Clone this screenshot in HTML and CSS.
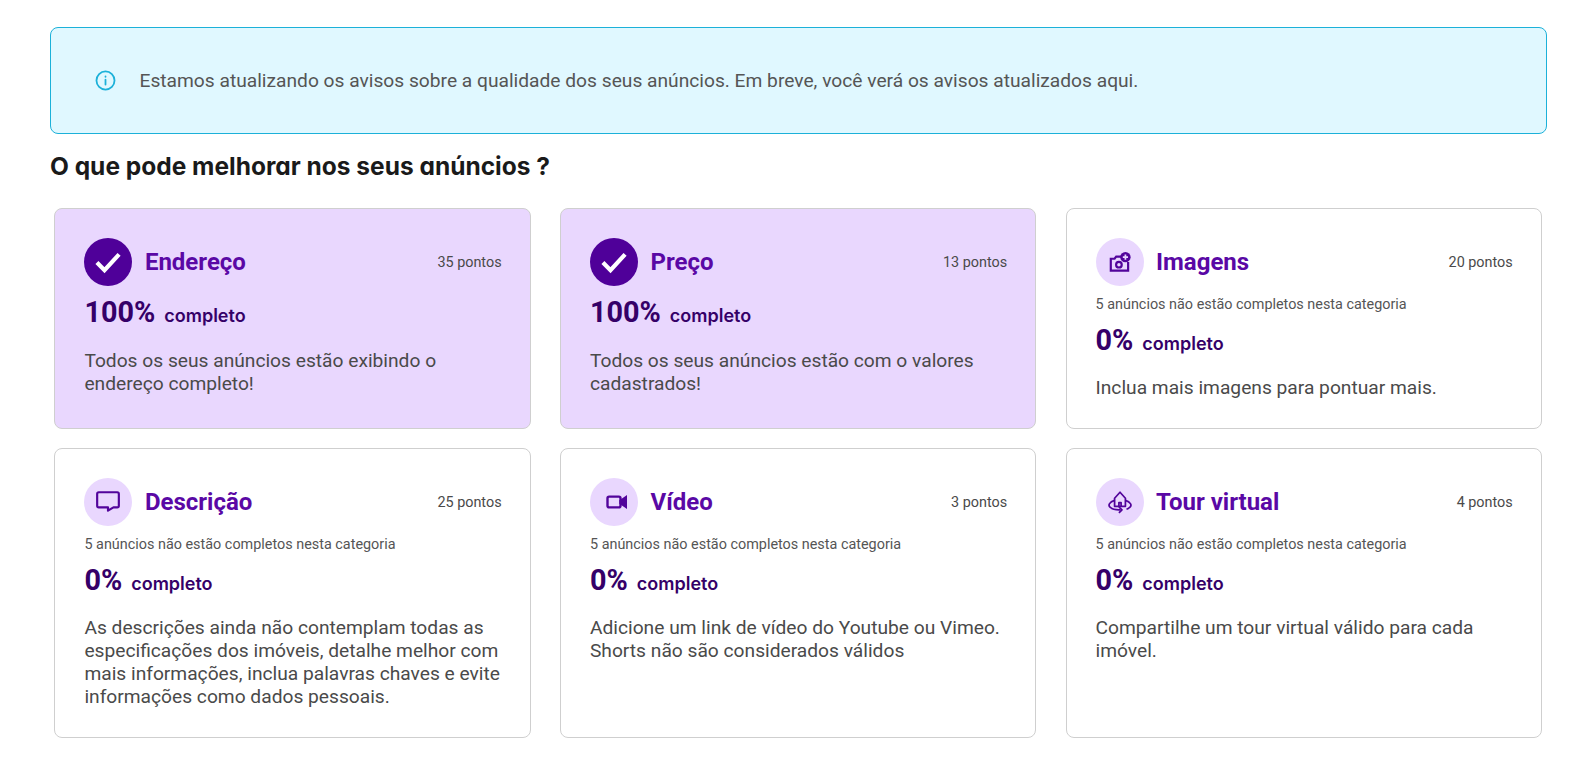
FILE: index.html
```html
<!DOCTYPE html>
<html lang="pt-BR">
<head>
  <meta charset="UTF-8">
  <meta name="viewport" content="width=device-width, initial-scale=1.0">
  <title>Qualidade dos anúncios</title>
  <link rel="stylesheet" href="styles.css">
</head>
<body>
  <div class="container">
    <div class="aviso">
      <svg class="aviso-icon" viewBox="0 0 20 20" fill="none" stroke="#1cb1d9" stroke-width="1.7" stroke-linecap="round">
        <circle cx="10" cy="10" r="8.6"/>
        <path d="M10 9.2v4.6"/>
        <path d="M10 6.2v.3"/>
      </svg>
      <p>Estamos atualizando os avisos sobre a qualidade dos seus anúncios. Em breve, você verá os avisos atualizados aqui.</p>
    </div>

    <h2>O que pode melhorar nos seus anúncios ?</h2>

    <div class="grid">
      <div class="card done">
        <div class="card-top">
          <span class="icon icon-done">
            <svg viewBox="0 0 24 24" fill="none" stroke="#fff" stroke-width="3.6"><path d="M2.500 12.500l6.500 6.500L21.500 5.500"/></svg>
          </span>
          <h3>Endereço</h3>
          <span class="pontos">35 pontos</span>
        </div>
        <div class="pct"><strong>100%</strong> <span>completo</span></div>
        <p class="desc">Todos os seus anúncios estão exibindo o endereço completo!</p>
      </div>

      <div class="card done">
        <div class="card-top">
          <span class="icon icon-done">
            <svg viewBox="0 0 24 24" fill="none" stroke="#fff" stroke-width="3.6"><path d="M2.500 12.500l6.500 6.500L21.500 5.500"/></svg>
          </span>
          <h3>Preço</h3>
          <span class="pontos">13 pontos</span>
        </div>
        <div class="pct"><strong>100%</strong> <span>completo</span></div>
        <p class="desc">Todos os seus anúncios estão com o valores cadastrados!</p>
      </div>

      <div class="card">
        <div class="card-top">
          <span class="icon">
            <svg viewBox="0 0 24 24" fill="none" stroke="#52049b" stroke-width="2">
              <path d="M13 7H8.500L7 9H3.500v11h16v-8"/>
              <circle cx="11" cy="14.500" r="2.600"/>
              <circle cx="17" cy="7.500" r="4.800" fill="#52049b" stroke="none"/>
              <path d="M17 5.100v4.800M14.600 7.500h4.800" stroke="#e9d7fe" stroke-width="1.600"/>
            </svg>
          </span>
          <h3>Imagens</h3>
          <span class="pontos">20 pontos</span>
        </div>
        <div class="aviso-card">5 anúncios não estão completos nesta categoria</div>
        <div class="pct"><strong>0%</strong> <span>completo</span></div>
        <p class="desc">Inclua mais imagens para pontuar mais.</p>
      </div>

      <div class="card">
        <div class="card-top">
          <span class="icon">
            <svg viewBox="0 0 24 24" fill="none" stroke="#52049b" stroke-width="2" stroke-linejoin="round">
              <path d="M2 4.500A1.500 1.500 0 0 1 3.500 3h17A1.500 1.500 0 0 1 22 4.500v11a1.500 1.500 0 0 1-1.500 1.500H17l-5 3v-3H3.500A1.500 1.500 0 0 1 2 15.500z"/>
            </svg>
          </span>
          <h3>Descrição</h3>
          <span class="pontos">25 pontos</span>
        </div>
        <div class="aviso-card">5 anúncios não estão completos nesta categoria</div>
        <div class="pct"><strong>0%</strong> <span>completo</span></div>
        <p class="desc">As descrições ainda não contemplam todas as especificações dos imóveis, detalhe melhor com mais informações, inclua palavras chaves e evite informações como dados pessoais.</p>
      </div>

      <div class="card">
        <div class="card-top">
          <span class="icon">
            <svg viewBox="0 0 24 24" fill="none" stroke="#52049b" stroke-width="2.200">
              <rect x="6" y="7" width="12" height="10" rx="1.500"/>
              <path d="M18 11l5-3.500v9L18 13z" fill="#52049b"/>
            </svg>
          </span>
          <h3>Vídeo</h3>
          <span class="pontos">3 pontos</span>
        </div>
        <div class="aviso-card">5 anúncios não estão completos nesta categoria</div>
        <div class="pct"><strong>0%</strong> <span>completo</span></div>
        <p class="desc">Adicione um link de vídeo do Youtube ou Vimeo. Shorts não são considerados válidos</p>
      </div>

      <div class="card">
        <div class="card-top">
          <span class="icon">
            <svg viewBox="0 0 24 24" fill="none" stroke="#52049b" stroke-width="1.600" stroke-linejoin="round">
              <path d="M7 16V8.500L12 3l5 5.500V16z"/>
              <path d="M11 16v-3.500h2V16"/>
              <path d="M7 10.500C2.500 12 .5 14.800 3 17c2 1.700 5.500 2.400 9.500 2.200M17 10.500c4.500 1.500 6.500 4.300 4 6.500-.8.700-1.800 1.300-3 1.700"/>
              <path d="M11 16.500l2.800 2.700L11 22"/>
            </svg>
          </span>
          <h3>Tour virtual</h3>
          <span class="pontos">4 pontos</span>
        </div>
        <div class="aviso-card">5 anúncios não estão completos nesta categoria</div>
        <div class="pct"><strong>0%</strong> <span>completo</span></div>
        <p class="desc">Compartilhe um tour virtual válido para cada imóvel.</p>
      </div>
    </div>
  </div>
</body>
</html>
```

FILE: styles.css
```css
body {
  font-family: Roboto, Arial, sans-serif;
  margin: 0;
  padding: 0;
  background: white;
  color: #4a4a4a;
}
.container {
  padding: 27px 37px 0 50px;
}
.aviso {
  display: flex;
  align-items: center;
  gap: 23.5px;
  height: 107px;
  box-sizing: border-box;
  padding: 0 44px 0 44px;
  background: #e0f8ff;
  border: 1px solid #1cb1d9;
  border-radius: 8px;
}
.aviso-icon {
  width: 21px;
  height: 21px;
  flex: none;
}
.aviso p {
  margin: 0;
  font-size: 19.2px;
  color: #555;
}
h2 {
  margin: 17px 0 0;
  font-family: Inter, sans-serif;
  font-feature-settings: "cv11";
  font-size: 24.5px;
  line-height: 30px;
  font-weight: 700;
  color: #1a1a1a;
}
.grid {
  display: grid;
  grid-template-columns: repeat(3, 476.2px);
  grid-template-rows: 221px 290px;
  gap: 19px 29.4px;
  margin: 27px 0 0 4.4px;
}
.card {
  box-sizing: border-box;
  padding: 29px 28px 0 29px;
  border: 1px solid #cfcfcf;
  border-radius: 8px;
  background: white;
}
.card.done {
  background: #e9d7fe;
}
.card-top {
  display: flex;
  align-items: center;
  gap: 12.5px;
  height: 48px;
}
.icon {
  width: 48px;
  height: 48px;
  flex: none;
  display: flex;
  align-items: center;
  justify-content: center;
  border-radius: 50%;
  background: #e9d7fe;
}
.icon svg {
  width: 26px;
  height: 26px;
}
.icon-done svg {
  width: 28px;
  height: 28px;
}
.icon-done {
  background: #4f0099;
}
h3 {
  margin: 0;
  flex: 1;
  font-size: 24px;
  font-weight: 700;
  color: #5a08a5;
}
.pontos {
  font-size: 14.4px;
  color: #4a4a4a;
}
.aviso-card {
  margin-top: 11px;
  font-size: 14.4px;
  line-height: 16px;
  color: #555;
}
.pct {
  margin-top: 7px;
  height: 38px;
  display: flex;
  align-items: baseline;
  gap: 9px;
  color: #350068;
}
.aviso-card + .pct {
  margin-top: 8px;
}
.pct strong {
  font-size: 28.8px;
  line-height: 38px;
}
.pct span {
  font-family: Inter, sans-serif;
  font-size: 18px;
  font-weight: 600;
}
.desc {
  margin: 16.5px 0 0;
  font-size: 19.2px;
  line-height: 23.04px;
  color: #4a4a4a;
}
.done .desc {
  margin-top: 17.5px;
}
```
